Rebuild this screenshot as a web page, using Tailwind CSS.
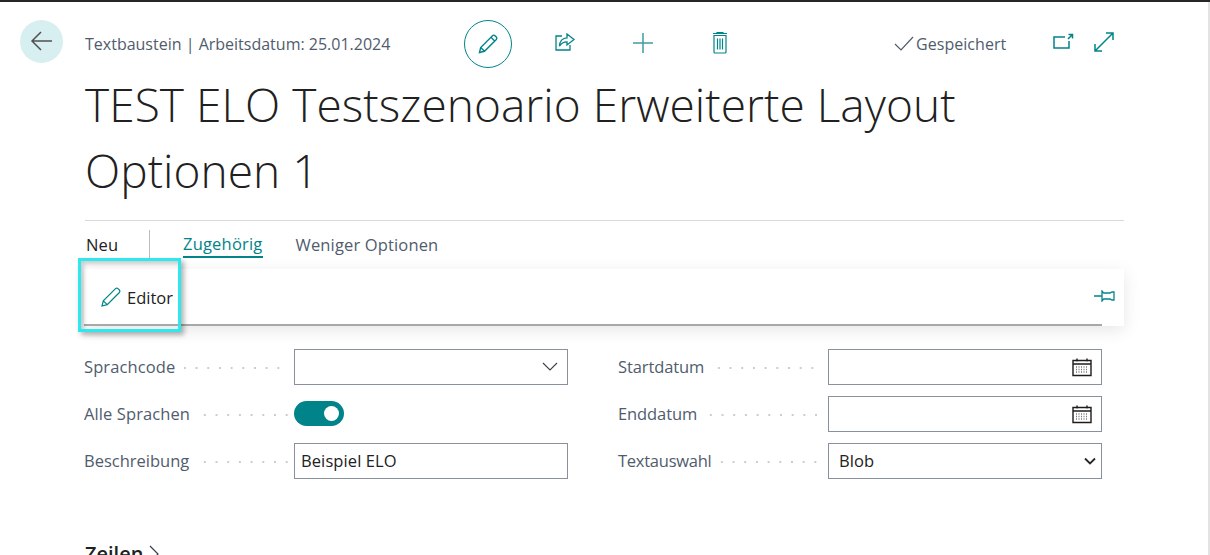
<!DOCTYPE html>
<html>
  <head>
    <meta charset="UTF-8" />
    <title>Textbaustein</title>
    <script src="https://cdn.jsdelivr.net/npm/@tailwindcss/browser@4"></script>
  </head>
  <body class="bg-white">
    <div class="relative h-[555px] w-[1210px] overflow-hidden border-t-2 border-[#262626] font-['Open_Sans',sans-serif] text-[#212121]">
      <div class="absolute right-0 top-0 h-full w-[2px] bg-[#e3e3e3]"></div>

      <!-- header -->
      <div class="flex h-[65px] items-center pl-[20px] pt-[19px]">
        <button class="flex h-[43px] w-[43px] -translate-y-[3px] items-center justify-center rounded-full bg-[#d8eff1]">
          <svg width="24" height="24" viewBox="0 0 24 24" fill="none" stroke="#505050" stroke-width="1.5"><path d="M22 12H2M11 3l-9 9 9 9" /></svg>
        </button>
        <div class="ml-[22px] w-[379px] text-[16px] text-[#505c6d]">Textbaustein | Arbeitsdatum: 25.01.2024</div>
        <button class="flex h-[48px] w-[48px] items-center justify-center rounded-full border border-[#008489]">
          <svg width="22" height="22" viewBox="0 0 22 22" fill="none" stroke="#008489" stroke-width="1.4"><path d="M2.5 19.5l1.2-5L15.500 2.700c.8-.7 1.800-.7 2.500 0l1.300 1.300c.7.7.7 1.700 0 2.500L7.500 18.300zM3.700 14.500l3.800 3.800M14 4.300l3.700 3.700" /></svg>
        </button>
        <svg class="ml-[42px] -translate-y-[2px]" width="22" height="20" viewBox="0 0 22 20" fill="none" stroke="#008489" stroke-width="1.300"><path d="M8 4H2v14h14v-5" /><path d="M13 2l7 5.500-7 5.500v-3.200c-4 0-6 1.500-7.500 4.500 0-5 3-8.500 7.500-8.500z" /></svg>
        <svg class="ml-[56px] -translate-y-[1px]" width="22" height="22" viewBox="0 0 22 22" fill="none" stroke="#3f9da1" stroke-width="1.5"><path d="M11 1v20M1 11h20" /></svg>
        <svg class="ml-[57px] -translate-y-[1px]" width="18" height="22" viewBox="0 0 18 22" fill="none" stroke="#008489" stroke-width="1.200"><path d="M2 1.500h14M6 1.500V.5h6v1M3 3.500v16.500c0 .5.500 1 1 1h10c.5 0 1-.5 1-1V3.500zM6.500 6.500v11M9 6.500v11M11.500 6.500v11" /></svg>
        <svg class="ml-[165px]" width="20" height="16" viewBox="0 0 20 16" fill="none" stroke="#505c6d" stroke-width="1.200"><path d="M1 8l6 6L19 1" /></svg>
        <div class="ml-[2px] w-[92px] text-[16px] tracking-[0.05px] text-[#505c6d]">Gespeichert</div>
        <svg class="ml-[44px] -translate-y-[2px]" width="22" height="18" viewBox="0 0 22 18" fill="none" stroke="#008489" stroke-width="1.500"><path d="M13 4H2v11h15V8M16 6l4-4M16.500 1.500h4v4" /></svg>
        <svg class="ml-[19px] -translate-y-[2px]" width="22" height="22" viewBox="0 0 22 22" fill="none" stroke="#008489" stroke-width="1.500"><path d="M2 20L20 2M13 2h7v7M2 13v7h7" /></svg>
      </div>

      <!-- title -->
      <h1 class="ml-[85px] mt-[4px] w-[1000px] text-[46px] font-light leading-[66px] tracking-[0.05px] text-[#212121]">TEST ELO Testszenoario Erweiterte Layout Optionen 1</h1>

      <!-- action tabs -->
      <div class="ml-[85px] mt-[17px] w-[1039px] border-t border-[#d9d9d9]">
        <div class="flex h-[38px] items-center pt-[10px] text-[16.500px] tracking-[0.1px]">
          <span class="ml-[1px] w-[63px] text-[#212121]">Neu</span>
          <span class="h-[28px] w-px -translate-y-[1px] bg-[#bdbdbd]"></span>
          <span class="ml-[33px] border-b-2 border-[#008489] leading-[24px] tracking-[0.2px] text-[#008489]">Zugehörig</span>
          <span class="ml-[33px] tracking-[0.15px] text-[#505c6d]">Weniger Optionen</span>
        </div>
      </div>

      <!-- action panel -->
      <div class="relative ml-[84px] mt-[10px] h-[57px] w-[1040px] bg-white shadow-[0_4px_16px_rgba(0,0,0,0.1)]">
        <div class="flex h-[55px] w-[1018px] items-center pl-[16px] pt-[3px]">
          <svg class="-translate-y-[1px]" width="22" height="22" viewBox="0 0 22 22" fill="none" stroke="#008489" stroke-width="1.200"><path d="M2 20l1.300-5.200L15.500 2.600c.8-.7 1.800-.7 2.500 0l1.400 1.400c.7.7.7 1.700 0 2.500L7.200 18.700zM3.300 14.800l3.900 3.900" /></svg>
          <span class="ml-[5px] text-[16.500px] text-[#212121]">Editor</span>
          <svg class="ml-auto -mr-[14px] -translate-y-[2px]" width="22" height="12" viewBox="0 0 22 12" fill="none" stroke="#008489" stroke-width="1.300"><path d="M0 6h8M8 1c1 1 1 2 2 2h6c1 0 1-1 2-1h2v8h-2c-1 0-1-1-2-1h-6c-1 0-1 1-2 2z" /></svg>
        </div>
        <div class="h-[2px] w-[1018px] bg-[#a8a8a8]"></div>
        <!-- highlight box round the Editor button -->
        <div class="absolute -top-[11px] -left-[6px] h-[74px] w-[103px] border-[3px] border-[#2de8ec] shadow-[3px_3px_5px_rgba(0,0,0,0.3),inset_3px_3px_4px_rgba(0,0,0,0.2)]"></div>
      </div>

      <!-- fields -->
      <div class="ml-[84px] mt-[23px] grid w-[1018px] grid-cols-[484px_484px] gap-x-[50px] gap-y-[11px] text-[16.500px] tracking-[0.1px] text-[#505c6d]">
        <div class="flex h-[36px] items-center">
          <span>Sprachcode</span>
          <span class="ml-[4px] mr-[5px] h-[4px] flex-1 translate-y-[1px] bg-[radial-gradient(circle,#cccccc_1.100px,transparent_1.400px)] bg-[length:11.700px_4px]"></span>
          <div class="flex h-[36px] w-[274px] items-center justify-end border border-[#8a919e] pr-[9px]">
            <svg width="16" height="10" viewBox="0 0 16 10" fill="none" stroke="#39404a" stroke-width="1.100"><path d="M1 1l7 7 7-7" /></svg>
          </div>
        </div>
        <div class="flex h-[36px] items-center">
          <span class="tracking-[-0.1px]">Startdatum</span>
          <span class="ml-[9px] mr-[5px] h-[4px] flex-1 translate-y-[1px] bg-[radial-gradient(circle,#cccccc_1.100px,transparent_1.400px)] bg-[length:11.700px_4px]"></span>
          <div class="flex h-[36px] w-[274px] items-center justify-end border border-[#8a919e] pr-[9px]">
            <svg width="20" height="20" viewBox="0 0 20 20" fill="none" stroke="#1c1c1c" stroke-width="1.400"><path d="M1 3.500h18v15H1zM1 7h18M5 1.500v3M15 1.500v3" /><path d="M4 10h12M4 12.500h12M4 15h12" stroke="#7a7a7a" stroke-dasharray="1 1.500" /></svg>
          </div>
        </div>
        <div class="flex h-[36px] items-center">
          <span>Alle Sprachen</span>
          <span class="ml-[9px] mr-[5px] h-[4px] flex-1 translate-y-[1px] bg-[radial-gradient(circle,#cccccc_1.100px,transparent_1.400px)] bg-[length:11.700px_4px]"></span>
          <div class="w-[274px]">
            <div class="flex h-[25px] w-[50px] -translate-y-[1px] items-center justify-end rounded-full bg-[#008489] pr-[5px]">
              <span class="h-[15px] w-[15px] rounded-full bg-white"></span>
            </div>
          </div>
        </div>
        <div class="flex h-[36px] items-center">
          <span class="tracking-[-0.1px]">Enddatum</span>
          <span class="ml-[8px] mr-[5px] h-[4px] flex-1 translate-y-[1px] bg-[radial-gradient(circle,#cccccc_1.100px,transparent_1.400px)] bg-[length:11.700px_4px]"></span>
          <div class="flex h-[36px] w-[274px] items-center justify-end border border-[#8a919e] pr-[9px]">
            <svg width="20" height="20" viewBox="0 0 20 20" fill="none" stroke="#1c1c1c" stroke-width="1.400"><path d="M1 3.500h18v15H1zM1 7h18M5 1.500v3M15 1.500v3" /><path d="M4 10h12M4 12.500h12M4 15h12" stroke="#7a7a7a" stroke-dasharray="1 1.500" /></svg>
          </div>
        </div>
        <div class="flex h-[36px] items-center">
          <span class="tracking-[0px]">Beschreibung</span>
          <span class="ml-[10px] mr-[5px] h-[4px] flex-1 translate-y-[1px] bg-[radial-gradient(circle,#cccccc_1.100px,transparent_1.400px)] bg-[length:11.700px_4px]"></span>
          <div class="flex h-[36px] w-[274px] items-center border border-[#8a919e] pl-[6px] text-[#212121]">Beispiel ELO</div>
        </div>
        <div class="flex h-[36px] items-center">
          <span class="tracking-[-0.25px]">Textauswahl</span>
          <span class="ml-[4px] mr-[5px] h-[4px] flex-1 translate-y-[1px] bg-[radial-gradient(circle,#cccccc_1.100px,transparent_1.400px)] bg-[length:11.700px_4px]"></span>
          <div class="flex h-[36px] w-[274px] items-center justify-between border border-[#8a919e] pl-[10px] pr-[5px] text-[#212121]">
            <span>Blob</span>
            <svg width="12" height="8" viewBox="0 0 12 8" fill="none" stroke="#262626" stroke-width="1.800"><path d="M1 1.500l5 5 5-5" /></svg>
          </div>
        </div>
      </div>

      <!-- section heading, cut off by the window -->
      <div class="ml-[85px] mt-[60px] flex items-center gap-[6px] text-[20px] font-semibold text-[#212121]">
        <span>Zeilen</span>
        <svg width="10" height="18" viewBox="0 0 10 18" fill="none" stroke="#39404a" stroke-width="1.200"><path d="M1 1l8 8-8 8" /></svg>
      </div>
    </div>
  </body>
</html>
